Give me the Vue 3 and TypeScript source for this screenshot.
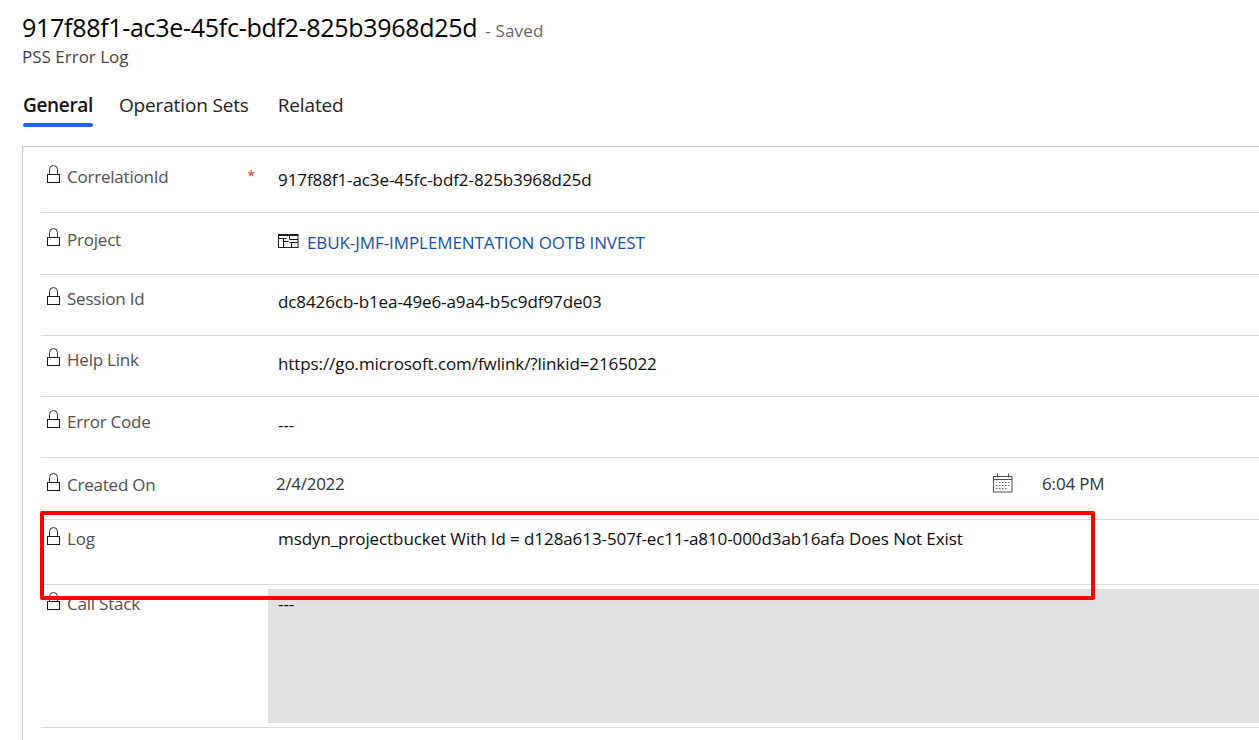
<script setup lang="ts">
interface Row {
  label: string
  value: string
  height: number
  labelTop: number
  valueTop: number
  kind?: 'link' | 'date' | 'multi' | 'locked'
  required?: boolean
}

const rows: Row[] = [
  { label: 'CorrelationId', value: '917f88f1-ac3e-45fc-bdf2-825b3968d25d', height: 66, labelTop: 20, valueTop: 23, required: true },
  { label: 'Project', value: 'EBUK-JMF-IMPLEMENTATION OOTB INVEST', height: 62, labelTop: 17, valueTop: 20, kind: 'link' },
  { label: 'Session Id', value: 'dc8426cb-b1ea-49e6-a9a4-b5c9df97de03', height: 61, labelTop: 14, valueTop: 17 },
  { label: 'Help Link', value: 'https://go.microsoft.com/fwlink/?linkid=2165022', height: 61, labelTop: 14, valueTop: 18 },
  { label: 'Error Code', value: '---', height: 61, labelTop: 15, valueTop: 18 },
  { label: 'Created On', value: '2/4/2022', height: 62, labelTop: 17, valueTop: 16, kind: 'date' },
  { label: 'Log', value: 'msdyn_projectbucket With Id = d128a613-507f-ec11-a810-000d3ab16afa Does Not Exist', height: 65, labelTop: 9, valueTop: 9 },
  { label: 'Call Stack', value: '---', height: 143, labelTop: 9, valueTop: 9, kind: 'locked' }
]
</script>

<template>
  <div class="page">
    <header class="head">
      <div class="title-line">
        <h1 class="title">917f88f1-ac3e-45fc-bdf2-825b3968d25d</h1>
        <span class="saved">- Saved</span>
      </div>
      <div class="entity">PSS Error Log</div>
    </header>

    <nav class="tabs">
      <span class="tab active">General</span>
      <span class="tab">Operation Sets</span>
      <span class="tab">Related</span>
    </nav>

    <section class="card">
      <div
        v-for="row in rows"
        :key="row.label"
        class="row"
        :style="{ height: row.height + 'px' }"
      >
        <div class="label" :style="{ paddingTop: row.labelTop + 'px' }">
          <svg class="lock" width="16" height="18" viewBox="0 0 16 18" fill="none">
            <path d="M3.5 9V4.5a4 4 0 0 1 8 0V9" stroke="#2b2b3a" stroke-width="1" />
            <rect x="1.5" y="9.5" width="12" height="8" stroke="#14142a" stroke-width="1" />
          </svg>
          <span class="label-text">{{ row.label }}</span>
          <span v-if="row.required" class="req">*</span>
        </div>

        <div
          class="value"
          :class="{ locked: row.kind === 'locked' }"
          :style="{ paddingTop: row.valueTop + 'px' }"
        >
          <template v-if="row.kind === 'link'">
            <svg class="proj" width="21" height="14" viewBox="0 0 21 14" fill="none" stroke="#1c1c1c" stroke-width="1">
              <rect x="0.5" y="0.5" width="19.5" height="13" />
              <path d="M0.5 1.5H20M0.5 4.5H8.5M5.5 4.5V13.5M5.5 7.5H10.5M11.5 1V5.5H20M11.5 8.5H20M13.5 8.5V13.5" />
            </svg>
            <span class="link">{{ row.value }}</span>
          </template>
          <template v-else-if="row.kind === 'date'">
            <span class="date">{{ row.value }}</span>
            <svg class="cal" width="20" height="20" viewBox="0 0 20 20" fill="none" stroke="#4a4f58" stroke-width="1">
              <rect x="0.5" y="3.5" width="18.5" height="15.5" />
              <path d="M0.5 6.5H19M4.5 0.5V4.5M15.5 0.5V4.5" />
              <path d="M6 9.5h1.5M9 9.5h1.5M12 9.5h1.5M15 9.5h1.5M3 12.5h1.5M6 12.5h1.5M9 12.5h1.5M12 12.5h1.5M15 12.5h1.5M3 15.5h1.5M6 15.5h1.5M9 15.5h1.5M12 15.5h1.5" stroke="#5a6478" stroke-width="1.2" />
            </svg>
            <span class="time">6:04 PM</span>
          </template>
          <span v-else class="text">{{ row.value }}</span>
        </div>
      </div>
    </section>

    <div class="highlight"></div>
  </div>
</template>

<style scoped>
.page {
  position: relative;
  width: 1259px;
  height: 740px;
  overflow: hidden;
  background: #fff;
  font-family: "Open Sans", "Noto Sans", sans-serif;
  color: #222;
}
.head {
  padding: 11px 0 0 22px;
}
.title-line {
  display: flex;
  align-items: baseline;
  height: 32px;
}
.title {
  margin: 0;
  font-size: 25px;
  line-height: 32px;
  font-weight: 400;
  color: #000;
  letter-spacing: -0.29px;
}
.saved {
  margin-left: 8px;
  font-size: 17px;
  color: #666;
  letter-spacing: 0.15px;
}
.entity {
  margin-top: 3px;
  font-size: 17px;
  line-height: 22px;
  font-weight: 500;
  color: #444;
  letter-spacing: 0;
}
.tabs {
  display: flex;
  margin-top: 21px;
  padding-left: 23px;
  height: 57px;
}
.tab {
  height: 40px;
  margin-right: 29px;
  font-size: 19px;
  line-height: 32px;
  color: #222;
  letter-spacing: -0.15px;
  white-space: nowrap;
}
.tab.active {
  position: relative;
  font-weight: 600;
  color: #111;
  letter-spacing: -0.33px;
  margin-right: 26px;
}
.tab.active::after {
  content: "";
  position: absolute;
  left: 0;
  right: 0;
  bottom: 2px;
  height: 4px;
  border-radius: 2px;
  background: #2266e3;
}
.card {
  margin: 0 0 0 22px;
  border-top: 1px solid #c8c8c8;
  border-left: 1px solid #c8c8c8;
  padding: 0 0 12px 18px;
}
.row {
  display: flex;
  box-sizing: border-box;
  border-bottom: 1px solid #d9d9d9;
}
.label {
  display: flex;
  align-items: flex-start;
  box-sizing: border-box;
  width: 227px;
  flex: none;
  padding-left: 5px;
  font-size: 17px;
  line-height: 20px;
  color: #505050;
  letter-spacing: -0.22px;
}
.lock {
  flex: none;
  margin-top: -2px;
  margin-right: 5px;
}
.label-text {
  white-space: nowrap;
}
.req {
  margin-left: auto;
  margin-right: 13px;
  margin-top: -1px;
  color: #e0301e;
  font-size: 14px;
}
.value {
  display: flex;
  align-items: flex-start;
  flex: 1;
  min-width: 0;
  box-sizing: border-box;
  padding-left: 10px;
  font-size: 17px;
  line-height: 20px;
  font-weight: 500;
  color: #0c0c0c;
  letter-spacing: -0.09px;
  white-space: nowrap;
}
.value.locked {
  background: #e1e1e1;
  margin: 4px 0;
  padding-top: 5px !important;
}
.proj {
  flex: none;
  margin-top: 1px;
  margin-right: 8px;
}
.link {
  color: #154fa8;
  font-weight: 500;
  letter-spacing: -0.08px;
}
.date {
  margin-left: -2px;
  width: 717px;
  font-weight: 400;
  color: #333;
  letter-spacing: -0.3px;
}
.cal {
  flex: none;
  margin-top: -1px;
  margin-left: 0;
}
.time {
  margin-left: 29px;
  font-weight: 400;
  color: #333;
  letter-spacing: -0.15px;
}
.highlight {
  position: absolute;
  left: 40px;
  top: 511px;
  width: 1055px;
  height: 89px;
  box-sizing: border-box;
  border: 4px solid #fe0000;
  border-radius: 2px;
}
</style>
